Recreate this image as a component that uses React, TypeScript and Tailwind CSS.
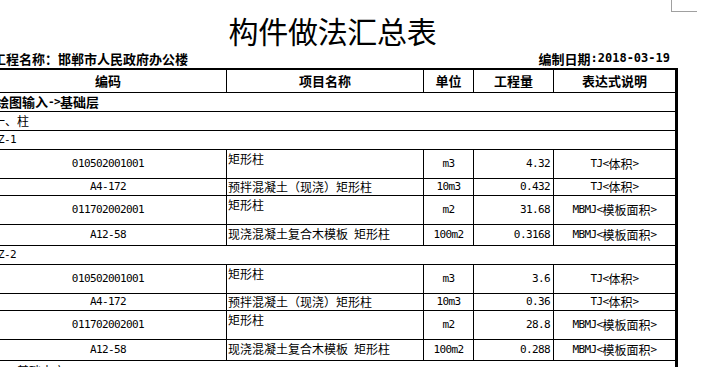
import React from "react";

type Row = {
  code: string;
  name: string;
  unit: string;
  qty: string;
  expr: string;
  h: string;
  top: boolean;
};

const groups: { id: string; rows: Row[] }[] = [
  {
    id: "KZ-1",
    rows: [
      { code: "010502001001", name: "矩形柱", unit: "m3", qty: "4.32", expr: "TJ<体积>", h: "h-[29px]", top: true },
      { code: "A4-172", name: "预拌混凝土（现浇）矩形柱", unit: "10m3", qty: "0.432", expr: "TJ<体积>", h: "h-[17px]", top: false },
      { code: "011702002001", name: "矩形柱", unit: "m2", qty: "31.68", expr: "MBMJ<模板面积>", h: "h-[29px]", top: true },
      { code: "A12-58", name: "现浇混凝土复合木模板 矩形柱", unit: "100m2", qty: "0.3168", expr: "MBMJ<模板面积>", h: "h-[21px]", top: false },
    ],
  },
  {
    id: "KZ-2",
    rows: [
      { code: "010502001001", name: "矩形柱", unit: "m3", qty: "3.6", expr: "TJ<体积>", h: "h-[29px]", top: true },
      { code: "A4-172", name: "预拌混凝土（现浇）矩形柱", unit: "10m3", qty: "0.36", expr: "TJ<体积>", h: "h-[17px]", top: false },
      { code: "011702002001", name: "矩形柱", unit: "m2", qty: "28.8", expr: "MBMJ<模板面积>", h: "h-[29px]", top: true },
      { code: "A12-58", name: "现浇混凝土复合木模板 矩形柱", unit: "100m2", qty: "0.288", expr: "MBMJ<模板面积>", h: "h-[21px]", top: false },
    ],
  },
];

function Mixed({ s }: { s: string }) {
  const parts = s.split(/([\x20-\x7e]+)/).filter((p) => p.length > 0);
  return (
    <>
      {parts.map((p, i) =>
        /^[\x20-\x7e]+$/.test(p) ? (
          <span key={i} className="font-['DejaVu_Sans_Mono',monospace] text-[11px] tracking-[-0.6px] whitespace-pre">
            {p}
          </span>
        ) : (
          <span key={i}>{p}</span>
        )
      )}
    </>
  );
}

const gridCols = "grid grid-cols-[237px_197px_50px_80px_121px]";

export default function App() {
  return (
    <div className="relative w-[719px] h-[367px] overflow-hidden bg-white text-black font-['Noto_Sans_CJK_SC',sans-serif] text-[12px] leading-[14px]">
      <div className="absolute top-0 left-[671px] w-[26px] h-[12px] border-l border-b border-[#a0a0a0]" />
      <div className="ml-[-10px] w-[688px] flex flex-col">
        <div className="h-[51px] pt-[14px] flex justify-center pr-[3px]">
          <div className="text-[30px] leading-[32px] tracking-[-0.3px]">构件做法汇总表</div>
        </div>
        <div className="h-[17px] pb-[2px] flex items-center justify-between pr-[8px] font-bold text-[13px] leading-[15px]">
          <div className="ml-[3px]">工程名称：邯郸市人民政府办公楼</div>
          <div className="flex items-center">
            <span>编制日期</span>
            <span className="font-['DejaVu_Sans_Mono',monospace] text-[12px]">:2018-03-19</span>
          </div>
        </div>
        <div className="border-t-2 border-r-[3px] border-black">
          <div className={`${gridCols} h-[23px] border-b border-black font-bold text-[13px]`}>
            <div className="border-r border-black flex items-center justify-center">编码</div>
            <div className="border-r border-black flex items-center justify-center">项目名称</div>
            <div className="border-r border-black flex items-center justify-center">单位</div>
            <div className="border-r border-black flex items-center justify-center">工程量</div>
            <div className="flex items-center justify-center">表达式说明</div>
          </div>
          <div className="h-[19px] border-b border-black flex items-center pl-[6px] font-bold text-[13px]">
            <Mixed s="绘图输入->基础层" />
          </div>
          <div className="h-[19px] border-b border-black flex items-center pl-[3px]">一、柱</div>
          {groups.map((g) => (
            <React.Fragment key={g.id}>
              <div className="h-[19px] border-b border-black flex items-center pl-[2px]">
                <Mixed s={g.id} />
              </div>
              {g.rows.map((r, i) => (
                <div key={i} className={`${gridCols} ${r.h} border-b border-black`}>
                  <div className="border-r border-black flex items-center justify-center">
                    <Mixed s={r.code} />
                  </div>
                  <div className={`border-r border-black flex pl-[1px] ${r.top ? "items-start pt-[2px]" : "items-center"}`}>
                    <span className="whitespace-nowrap">
                      <Mixed s={r.name} />
                    </span>
                  </div>
                  <div className="border-r border-black flex items-center justify-center">
                    <Mixed s={r.unit} />
                  </div>
                  <div className="border-r border-black flex items-center justify-end pr-[3px]">
                    <Mixed s={r.qty} />
                  </div>
                  <div className="flex items-center justify-center">
                    <Mixed s={r.expr} />
                  </div>
                </div>
              ))}
            </React.Fragment>
          ))}
          <div className="h-[19px] flex items-center pl-[3px]">二、基础土方</div>
        </div>
      </div>
    </div>
  );
}
